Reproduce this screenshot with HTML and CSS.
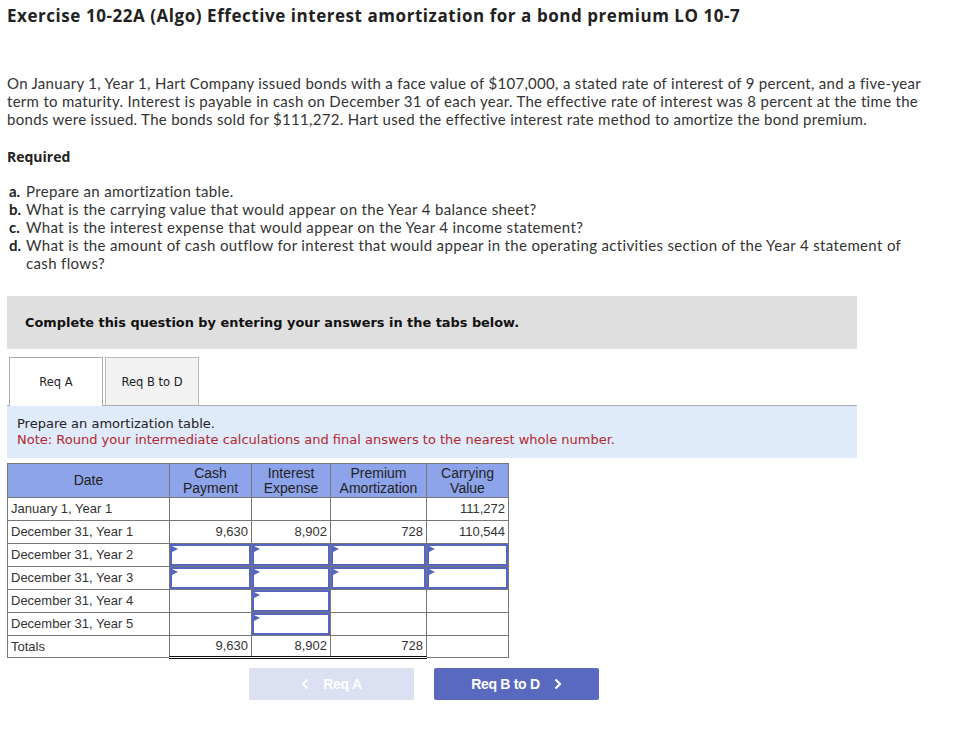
FILE: index.html
```html
<!DOCTYPE html>
<html>
<head>
<meta charset="utf-8">
<link rel="stylesheet" href="styles.css">
</head>
<body>
<div class="page">
  <h1 class="title">Exercise 10-22A (Algo) Effective interest amortization for a bond premium LO 10-7</h1>
  <p class="intro">On January 1, Year 1, Hart Company issued bonds with a face value of $107,000, a stated rate of interest of 9 percent, and a five-year term to maturity. Interest is payable in cash on December 31 of each year. The effective rate of interest was 8 percent at the time the bonds were issued. The bonds sold for $111,272. Hart used the effective interest rate method to amortize the bond premium.</p>
  <h2 class="req">Required</h2>
  <ol class="parts">
    <li><b>a.</b><span>Prepare an amortization table.</span></li>
    <li><b>b.</b><span>What is the carrying value that would appear on the Year 4 balance sheet?</span></li>
    <li><b>c.</b><span>What is the interest expense that would appear on the Year 4 income statement?</span></li>
    <li><b>d.</b><span>What is the amount of cash outflow for interest that would appear in the operating activities section of the Year 4 statement of cash flows?</span></li>
  </ol>
  <div class="banner">Complete this question by entering your answers in the tabs below.</div>
  <div class="tabs">
    <div class="tab active">Req A</div>
    <div class="tab">Req B to D</div>
  </div>
  <div class="note">
    <div>Prepare an amortization table.</div>
    <div class="red">Note: Round your intermediate calculations and final answers to the nearest whole number.</div>
  </div>
  <table class="amort">
    <colgroup>
      <col class="c1"><col class="c2"><col class="c3"><col class="c4"><col class="c5">
    </colgroup>
    <thead>
      <tr><th>Date</th><th>Cash<br>Payment</th><th>Interest<br>Expense</th><th>Premium<br>Amortization</th><th>Carrying<br>Value</th></tr>
    </thead>
    <tbody>
      <tr><td>January 1, Year 1</td><td></td><td></td><td></td><td class="num">111,272</td></tr>
      <tr><td>December 31, Year 1</td><td class="num">9,630</td><td class="num">8,902</td><td class="num">728</td><td class="num">110,544</td></tr>
      <tr><td>December 31, Year 2</td><td class="in"><div class="box"></div></td><td class="in"><div class="box"></div></td><td class="in"><div class="box"></div></td><td class="in"><div class="box"></div></td></tr>
      <tr><td>December 31, Year 3</td><td class="in"><div class="box"></div></td><td class="in"><div class="box"></div></td><td class="in"><div class="box"></div></td><td class="in"><div class="box"></div></td></tr>
      <tr><td>December 31, Year 4</td><td></td><td class="in"><div class="box"></div></td><td></td><td></td></tr>
      <tr><td>December 31, Year 5</td><td></td><td class="in"><div class="box"></div></td><td></td><td></td></tr>
      <tr class="tot"><td class="t">Totals</td><td class="num t d">9,630</td><td class="num t d">8,902</td><td class="num t d">728</td><td></td></tr>
    </tbody>
  </table>
  <div class="nav">
    <div class="btn prev"><svg width="8" height="12" viewBox="0 0 8 12"><path d="M6.5 1.5 L2 6 L6.5 10.5" fill="none" stroke="#fff" stroke-width="2.2"/></svg><span>Req A</span></div>
    <div class="btn next"><span>Req B to D</span><svg width="8" height="12" viewBox="0 0 8 12"><path d="M1.5 1.5 L6 6 L1.5 10.5" fill="none" stroke="#fff" stroke-width="2.2"/></svg></div>
  </div>
</div>
</body>
</html>
```
FILE: styles.css
```css
html, body { margin: 0; padding: 0; background: #fff; }
.page { padding: 4px 0 0 7px; color: #333; font-family: "Lato", "Liberation Sans", sans-serif; }
.title { margin: 0; font-family: "Open Sans", "Liberation Sans", sans-serif; font-size: 17px; font-weight: 700; color: #222; line-height: 24px; letter-spacing: 0.55px; }
.intro { margin: 46px 0 0 0; width: 930px; font-size: 15px; line-height: 18px; color: #333; letter-spacing: 0.3px; }
.req { margin: 20px 0 0 0; font-family: "Open Sans", "Liberation Sans", sans-serif; font-size: 14px; font-weight: 700; line-height: 18px; color: #222; }
.parts { list-style: none; margin: 16px 0 0 2px; padding: 0; font-size: 15px; line-height: 18px; width: 900px; letter-spacing: 0.35px; }
.parts li { display: flex; }
.parts li b { width: 17px; flex: none; color: #222; letter-spacing: 0; }
.banner { margin-top: 24px; width: 832px; height: 53px; padding-left: 18px; background: #dfdfdf; display: flex; align-items: center; font-family: "DejaVu Sans", Verdana, sans-serif; font-weight: 700; font-size: 12.9px; color: #111; }
.tabs { display: flex; gap: 2px; margin: 8px 0 0 2px; height: 48px; }
.tab { width: 92px; height: 47px; border: 1px solid #bbb; border-bottom: none; background: #f2f2f2; display: flex; align-items: center; justify-content: center; font-family: "DejaVu Sans", Verdana, sans-serif; font-size: 11.5px; color: #222; }
.tab.active { background: #fff; border-color: #aaa; height: 48px; position: relative; z-index: 1; }
.note { width: 840px; background: #dfeafa; border-top: 1px solid #aaa; padding: 10px 0 0 10px; font-family: "DejaVu Sans", Tahoma, sans-serif; font-size: 13px; line-height: 16px; color: #222; height: 42px; }
.note .red { color: #b3282d; }
.amort { margin-top: 5px; border-collapse: collapse; font-family: "Liberation Sans", Arial, sans-serif; font-size: 13px; color: #333; table-layout: fixed; width: 502px; }
.c1 { width: 162px; } .c2 { width: 82px; } .c3 { width: 79px; } .c4 { width: 96px; } .c5 { width: 82px; }
.amort th { background: #8da3ea; border: 1px solid #777; font-weight: 400; font-size: 14px; line-height: 15px; height: 33px; padding: 0; color: #222; }
.amort td { border: 1px solid #777; height: 22px; padding: 0 3px; line-height: 22px; white-space: nowrap; }
.amort tr.tot td { height: 20px; line-height: 20px; }
.amort td.num { text-align: right; }
.amort td.in { padding: 0; position: relative; }
.box { height: 18px; border: 2px solid #5566c2; position: relative; }
.box::before { content: ""; position: absolute; left: 0; top: 0; border-left: 6px solid #5566c2; border-top: 3px solid transparent; border-bottom: 3px solid transparent; }
.amort td.t { border-top: 1px solid #111; }
.amort td.d { border-bottom: 3px double #111; }
.nav { display: flex; gap: 20px; margin: 9px 0 0 242px; }
.btn { width: 165px; height: 32px; border-radius: 2px; display: flex; align-items: center; justify-content: center; gap: 14px; font-family: "Liberation Sans", Arial, sans-serif; font-weight: 700; font-size: 14px; color: #fff; letter-spacing: -0.3px; }
.btn.prev { background: #dbe0f3; }
.btn.next { background: #5869bf; }
```
